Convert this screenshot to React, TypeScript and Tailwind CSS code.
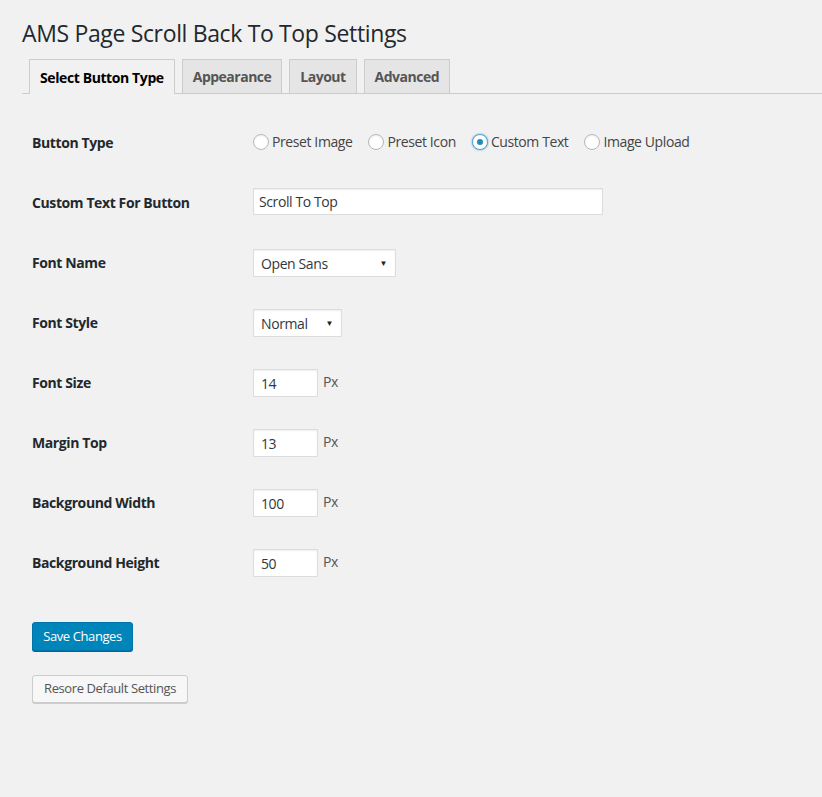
import React from 'react';

const font = { fontFamily: '"Open Sans", "Noto Sans", sans-serif' };

const tabs = ['Select Button Type', 'Appearance', 'Layout', 'Advanced'];
const radios = ['Preset Image', 'Preset Icon', 'Custom Text', 'Image Upload'];

function Row({ label, children }: { label: string; children: React.ReactNode }) {
  return (
    <div className="flex h-[60px] items-center">
      <div className="-mt-[2px] w-[221px] shrink-0 text-[14px] font-bold text-[#23282d]">{label}</div>
      <div className="flex items-center">{children}</div>
    </div>
  );
}

function Radio({ label, checked }: { label: string; checked?: boolean }) {
  return (
    <label className="mr-[16px] flex items-center text-[14px] text-[#444]">
      <span
        className={
          checked
            ? 'mr-[3px] flex h-[16px] w-[16px] items-center justify-center rounded-full border border-[#5b9dd9] bg-white shadow-[0_0_2px_rgba(30,140,190,0.8)]'
            : 'mr-[3px] flex h-[16px] w-[16px] items-center justify-center rounded-full border border-[#b4b9be] bg-white shadow-[inset_0_1px_2px_rgba(0,0,0,0.07)]'
        }
      >
        {checked && <span className="h-[6px] w-[6px] rounded-full bg-[#1e8cbe]" />}
      </span>
      {label}
    </label>
  );
}

function Select({ value, width }: { value: string; width: string }) {
  return (
    <div
      className={`${width} flex h-[28px] items-center justify-between border border-[#ddd] bg-white pl-[7px] pr-[8px] text-[14px] text-[#32373c] shadow-[inset_0_1px_2px_rgba(0,0,0,0.07)]`}
    >
      <span>{value}</span>
      <span className="text-[8px] text-[#222]">▼</span>
    </div>
  );
}

function NumberInput({ value }: { value: string }) {
  return (
    <div className="flex items-center">
      <div className="flex h-[28px] w-[65px] items-center border border-[#ddd] bg-white pl-[7px] text-[14px] text-[#32373c] shadow-[inset_0_1px_2px_rgba(0,0,0,0.07)]">
        {value}
      </div>
      <span className="ml-[5px] -mt-[3px] text-[14px] text-[#555]">Px</span>
    </div>
  );
}

export default function App() {
  return (
    <div className="min-h-[797px] w-full bg-[#f1f1f1] pl-[22px] tracking-[-0.4px]" style={font}>
      <h1 className="pt-[19px] text-[23px] leading-[29px] font-normal tracking-[-0.35px] text-[#23282d]">
        AMS Page Scroll Back To Top Settings
      </h1>

      <div className="mt-[11px] flex h-[35px] items-end border-b border-[#ccc] pl-[7px]">
        {tabs.map((t, i) => (
          <div
            key={t}
            className={
              i === 0
                ? '-mb-px mr-[7px] flex h-[35px] items-center border border-b-0 border-[#ccc] bg-[#f1f1f1] px-[10px] text-[14px] font-bold text-black'
                : 'mr-[7px] flex h-[34px] items-center border border-b-0 border-[#ccc] bg-[#e5e5e5] px-[10px] text-[14px] font-bold tracking-[-0.5px] text-[#555]'
            }
          >
            {t}
          </div>
        ))}
      </div>

      <div className="pl-[10px] pt-[19px]">
        <Row label="Button Type">
          <div className="-mt-[3px] flex items-center">
            {radios.map(r => (
              <Radio key={r} label={r} checked={r === 'Custom Text'} />
            ))}
          </div>
        </Row>
        <Row label="Custom Text For Button">
          <div className="-mt-[3px] flex h-[27px] w-[350px] items-center border border-[#ddd] bg-white pl-[5px] text-[14px] text-[#32373c] shadow-[inset_0_1px_2px_rgba(0,0,0,0.07)]">
            Scroll To Top
          </div>
        </Row>
        <Row label="Font Name">
          <Select value="Open Sans" width="w-[143px]" />
        </Row>
        <Row label="Font Style">
          <Select value="Normal" width="w-[89px]" />
        </Row>
        <Row label="Font Size">
          <NumberInput value="14" />
        </Row>
        <Row label="Margin Top">
          <NumberInput value="13" />
        </Row>
        <Row label="Background Width">
          <NumberInput value="100" />
        </Row>
        <Row label="Background Height">
          <NumberInput value="50" />
        </Row>

        <div className="pt-[29px]">
          <button className="h-[29px] w-[101px] rounded-[3px] border border-[#0073aa] bg-[#0085ba] text-[13px] text-white shadow-[0_1px_0_#006799]">
            Save Changes
          </button>
        </div>
        <div className="pt-[24px]">
          <button className="h-[28px] w-[156px] rounded-[3px] border border-[#ccc] bg-[#f7f7f7] text-[13px] text-[#555] shadow-[0_1px_0_#ccc]">
            Resore Default Settings
          </button>
        </div>
      </div>
    </div>
  );
}
